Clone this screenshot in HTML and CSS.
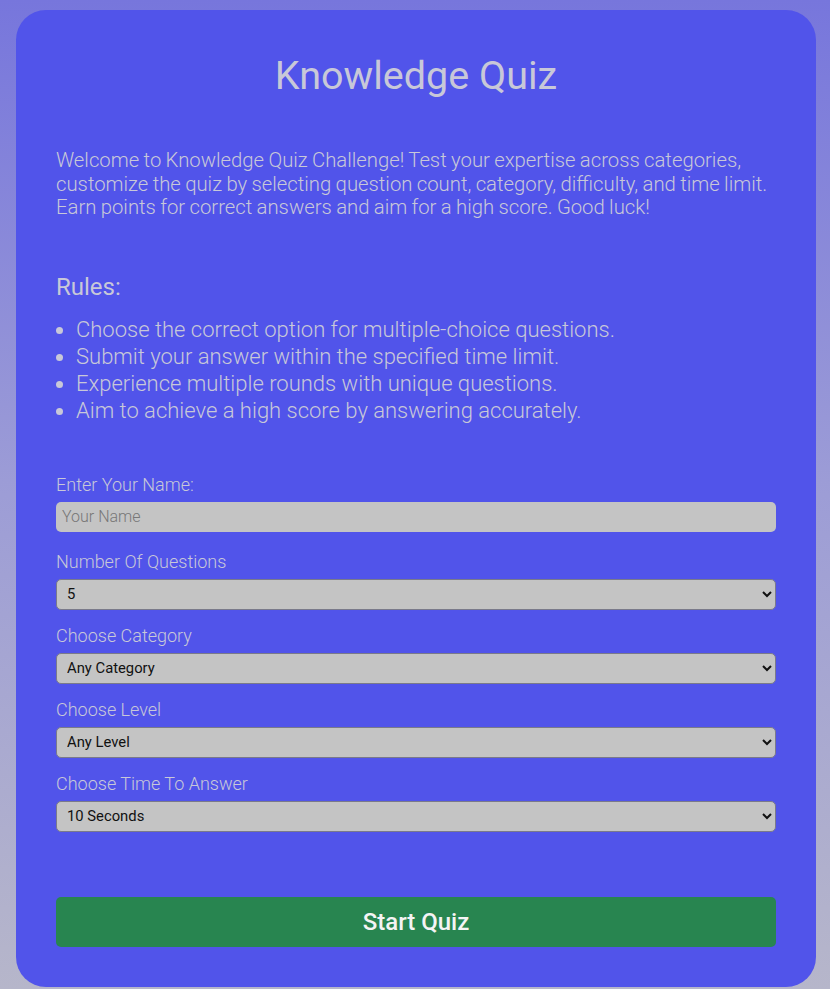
FILE: index.html
```html
<!DOCTYPE html>
<html lang="en">
<head>
<meta charset="utf-8">
<title>Knowledge Quiz</title>
<link rel="stylesheet" href="styles.css">
</head>
<body>
<main class="card">
  <h1 class="title">Knowledge Quiz</h1>
  <p class="intro">Welcome to Knowledge Quiz Challenge! Test your expertise across categories, customize the quiz by selecting question count, category, difficulty, and time limit. Earn points for correct answers and aim for a high score. Good luck!</p>
  <h2 class="rules-title">Rules:</h2>
  <ul class="rules">
    <li>Choose the correct option for multiple-choice questions.</li>
    <li>Submit your answer within the specified time limit.</li>
    <li>Experience multiple rounds with unique questions.</li>
    <li>Aim to achieve a high score by answering accurately.</li>
  </ul>
  <form class="form">
    <div class="field field-name">
      <label class="label" for="name">Enter Your Name:</label>
      <input class="control" id="name" type="text" placeholder="Your Name">
    </div>
    <div class="field">
      <label class="label" for="count">Number Of Questions</label>
      <select class="control" id="count"><option>5</option><option>10</option><option>15</option></select>
    </div>
    <div class="field">
      <label class="label" for="cat">Choose Category</label>
      <select class="control" id="cat"><option>Any Category</option></select>
    </div>
    <div class="field">
      <label class="label" for="level">Choose Level</label>
      <select class="control" id="level"><option>Any Level</option></select>
    </div>
    <div class="field">
      <label class="label" for="time">Choose Time To Answer</label>
      <select class="control" id="time"><option>10 Seconds</option></select>
    </div>
    <button class="start" type="button">Start Quiz</button>
  </form>
</main>
</body>
</html>
```
FILE: styles.css
```css
html, body {
  margin: 0;
  padding: 0;
}
body {
  min-height: 989px;
  background: linear-gradient(180deg, #7776dc 0%, #9d9dd6 50%, #b6b6ca 100%);
  font-family: Roboto, "Noto Sans", sans-serif;
  padding: 10px 14px 2px 16px;
  box-sizing: border-box;
}
.card {
  width: 800px;
  box-sizing: border-box;
  background: #5154ea;
  border-radius: 30px;
  padding: 42px 40px 40px;
  color: #c8c8d8;
}
.title {
  margin: 0;
  text-align: center;
  font-size: 39.5px;
  font-weight: 400;
  line-height: 47px;
}
.intro {
  margin: 50px 0 0;
  font-size: 20.3px;
  font-weight: 300;
  word-spacing: -0.6px;
  line-height: 23.5px;
}
.rules-title {
  margin: 52px 0 0;
  font-size: 24px;
  font-weight: 400;
  line-height: 30px;
}
.rules {
  margin: 14px 0 0;
  padding-left: 20px;
  font-size: 22px;
  font-weight: 300;
  line-height: 27px;
}
.form {
  margin-top: 50px;
  display: flex;
  flex-direction: column;
}
.field {
  display: flex;
  flex-direction: column;
  margin-bottom: 15px;
}
.field-name {
  margin-bottom: 19px;
}
.label {
  font-size: 18px;
  font-weight: 300;
  line-height: 22px;
  margin-bottom: 6px;
}
.control {
  height: 31px;
  box-sizing: border-box;
  background: #c4c4c4;
  border: 1px solid #7a7a8a;
  border-radius: 5px;
  font-family: Roboto, sans-serif;
  font-size: 14.8px;
  color: #111;
  padding: 0 6px;
  margin: 0;
}
input.control {
  height: 30px;
  border: none;
  font-size: 16px;
  font-weight: 300;
  padding: 0 6px;
}
input.control::placeholder {
  color: #777;
}
.start {
  margin-top: 50px;
  height: 50px;
  background: #288550;
  border: none;
  border-radius: 5px;
  color: #f4f4f4;
  font-family: Roboto, sans-serif;
  font-size: 24px;
  font-weight: 500;
}
```
